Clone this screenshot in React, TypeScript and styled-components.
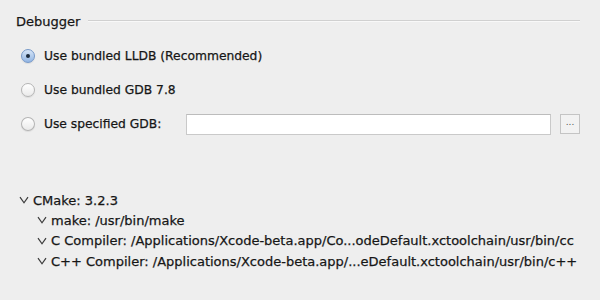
import styled, { createGlobalStyle } from "styled-components";

const GlobalStyle = createGlobalStyle`
  html, body {
    margin: 0;
    padding: 0;
    background: #eeeeee;
  }
  body {
    font-family: "DejaVu Sans", "Liberation Sans", sans-serif;
    color: #161616;
    -webkit-text-stroke: 0.25px currentColor;
  }
`;

const Page = styled.div`
  width: 600px;
  height: 300px;
  box-sizing: border-box;
  padding: 13px 20px 0 16px;
  display: flex;
  flex-direction: column;
`;

// GROUP HEADER
const GroupHeader = styled.div`
  display: flex;
  align-items: center;
  gap: 8px;
  height: 16px;
`;

const GroupTitle = styled.span`
  font-size: 13px;
`;

const Rule = styled.div`
  flex: 1;
  height: 1px;
  background: #d0d0d0;
  border-bottom: 1px solid #f8f8f8;
`;

// RADIO OPTIONS
const Options = styled.div`
  display: flex;
  flex-direction: column;
  gap: 14px;
  margin-top: 17px;
  padding-left: 5px;
`;

const OptionRow = styled.label`
  display: flex;
  align-items: center;
  height: 20px;
  font-size: 12.3px;
`;

const Radio = styled.span<{ $checked?: boolean }>`
  width: 14px;
  height: 14px;
  border-radius: 50%;
  box-sizing: border-box;
  margin-right: 9px;
  display: flex;
  align-items: center;
  justify-content: center;
  -webkit-text-stroke: 0;
  border: 1px solid ${(p) => (p.$checked ? "#7598c8" : "#b4b4b4")};
  background: ${(p) =>
    p.$checked
      ? "linear-gradient(#d6e5f7, #93b6e4)"
      : "linear-gradient(#ffffff, #eaeaea)"};
  box-shadow: 0 1px 1px rgba(0, 0, 0, 0.08);

  &::after {
    content: "";
    display: ${(p) => (p.$checked ? "block" : "none")};
    width: 4px;
    height: 4px;
    border-radius: 50%;
    background: #1b2a3c;
  }
`;

const OptionLabel = styled.span<{ $width?: number }>`
  width: ${(p) => (p.$width ? `${p.$width}px` : "auto")};
  flex-shrink: 0;
`;

const PathInput = styled.input`
  width: 367px;
  height: 21px;
  box-sizing: border-box;
  border: 1px solid #c9c9c9;
  border-top-color: #bcbcbc;
  background: #ffffff;
  outline: none;
  padding: 0 4px;
`;

const BrowseButton = styled.button`
  width: 20px;
  height: 20px;
  margin-left: 9px;
  padding: 0 0 4px;
  box-sizing: border-box;
  border: 1px solid #c4c4c4;
  background: #f2f2f2;
  font-size: 9px;
  color: #555;
  line-height: 1;
  font-family: inherit;
  -webkit-text-stroke: 0;
`;

// TOOLCHAIN TREE
const Tree = styled.div`
  display: flex;
  flex-direction: column;
  margin-top: 56px;
  padding-left: 3px;
`;

const TreeRow = styled.div<{ $level: number }>`
  display: flex;
  align-items: center;
  height: 20.3px;
  padding-left: ${(p) => p.$level * 18}px;
  font-size: 13px;
  white-space: nowrap;
`;

const Chevron = styled.svg`
  width: 10px;
  height: 8px;
  margin-right: 4px;
  flex-shrink: 0;
`;

const Caret = () => (
  <Chevron viewBox="0 0 10 8">
    <path d="M1 1.2 L5 6.8 L9 1.2" fill="none" stroke="#3c3c3c" strokeWidth="1.2" />
  </Chevron>
);

const rows = [
  { level: 0, text: "CMake: 3.2.3" },
  { level: 1, text: "make: /usr/bin/make" },
  {
    level: 1,
    text: "C Compiler: /Applications/Xcode-beta.app/Co...odeDefault.xctoolchain/usr/bin/cc",
  },
  {
    level: 1,
    text: "C++ Compiler: /Applications/Xcode-beta.app/...eDefault.xctoolchain/usr/bin/c++",
  },
];

export default function App() {
  return (
    <>
      <GlobalStyle />
      <Page>
        <GroupHeader>
          <GroupTitle>Debugger</GroupTitle>
          <Rule />
        </GroupHeader>

        <Options>
          <OptionRow>
            <Radio $checked />
            <OptionLabel>Use bundled LLDB (Recommended)</OptionLabel>
          </OptionRow>
          <OptionRow>
            <Radio />
            <OptionLabel>Use bundled GDB 7.8</OptionLabel>
          </OptionRow>
          <OptionRow>
            <Radio />
            <OptionLabel $width={142}>Use specified GDB:</OptionLabel>
            <PathInput />
            <BrowseButton>...</BrowseButton>
          </OptionRow>
        </Options>

        <Tree>
          {rows.map((r) => (
            <TreeRow key={r.text} $level={r.level}>
              <Caret />
              {r.text}
            </TreeRow>
          ))}
        </Tree>
      </Page>
    </>
  );
}
